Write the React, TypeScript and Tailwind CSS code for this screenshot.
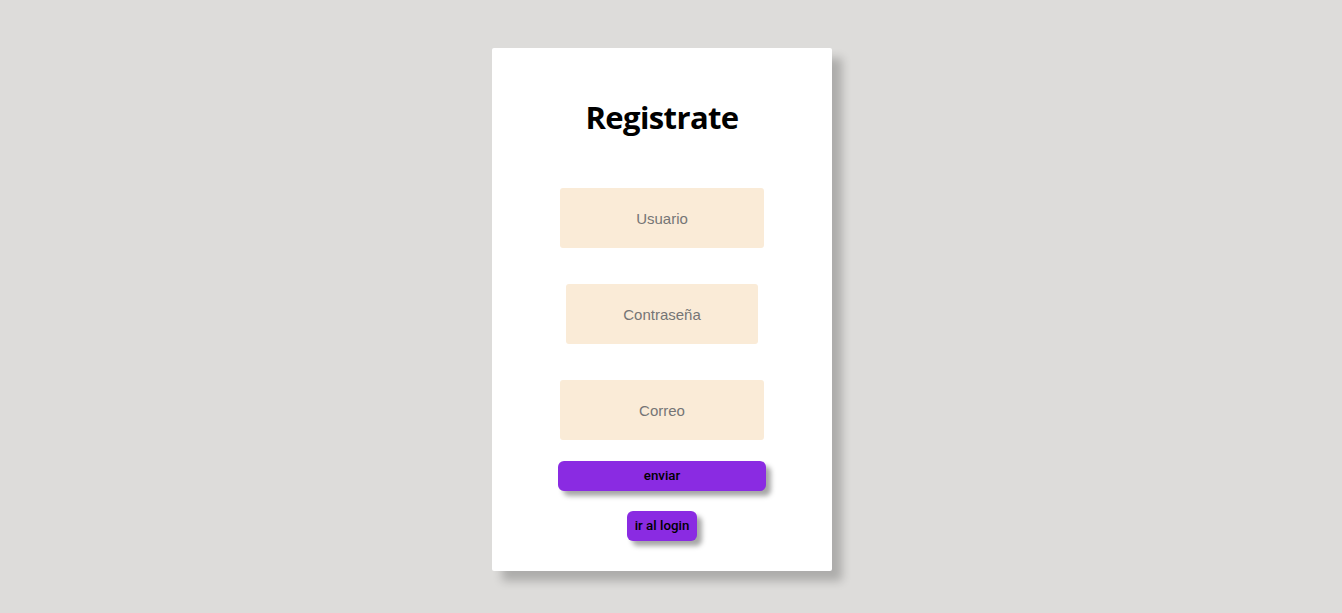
import React from 'react';

const fields = [
  { name: 'usuario', placeholder: 'Usuario', type: 'text', width: 'w-[204px]' },
  { name: 'password', placeholder: 'Contraseña', type: 'password', width: 'w-[192px]' },
  { name: 'correo', placeholder: 'Correo', type: 'email', width: 'w-[204px]' },
];

export default function App() {
  return (
    <div className="min-h-[613px] bg-[#dddcda] flex justify-center pt-[48px] pr-[18px] font-['Liberation_Sans',Arial,sans-serif]">
      <div className="w-[340px] h-[523px] bg-white rounded-[2px] shadow-[10px_10px_10px_rgba(0,0,0,0.22)] flex flex-col items-center pt-[49px]">
        {/* Header */}
        <h1 className="h-[40px] leading-[40px] text-[31px] font-bold text-black font-['Open_Sans','Noto_Sans',sans-serif] tracking-[-0.6px]">
          Registrate
        </h1>

        {/* Form */}
        <form className="flex flex-col items-center mt-[51px]" onSubmit={(e) => e.preventDefault()}>
          <div className="flex flex-col items-center gap-[36px]">
            {fields.map((f) => (
              <input
                key={f.name}
                type={f.type}
                name={f.name}
                placeholder={f.placeholder}
                className={`${f.width} h-[60px] bg-[#faebd7] rounded-[3px] text-center text-[15px] text-black placeholder:text-[#757575] outline-none`}
              />
            ))}
          </div>
          <button
            type="submit"
            className="mt-[21px] w-[208px] h-[30px] bg-[#8a2be2] rounded-[6px] text-[13.33px] font-medium text-black font-['Roboto',sans-serif] shadow-[5px_5px_5px_rgba(0,0,0,0.35)]"
          >
            enviar
          </button>
        </form>
        <button className="mt-[20px] w-[70px] h-[30px] bg-[#8a2be2] rounded-[6px] text-[13.33px] font-medium text-black font-['Roboto',sans-serif] shadow-[5px_5px_5px_rgba(0,0,0,0.35)]">
          ir al login
        </button>
      </div>
    </div>
  );
}
